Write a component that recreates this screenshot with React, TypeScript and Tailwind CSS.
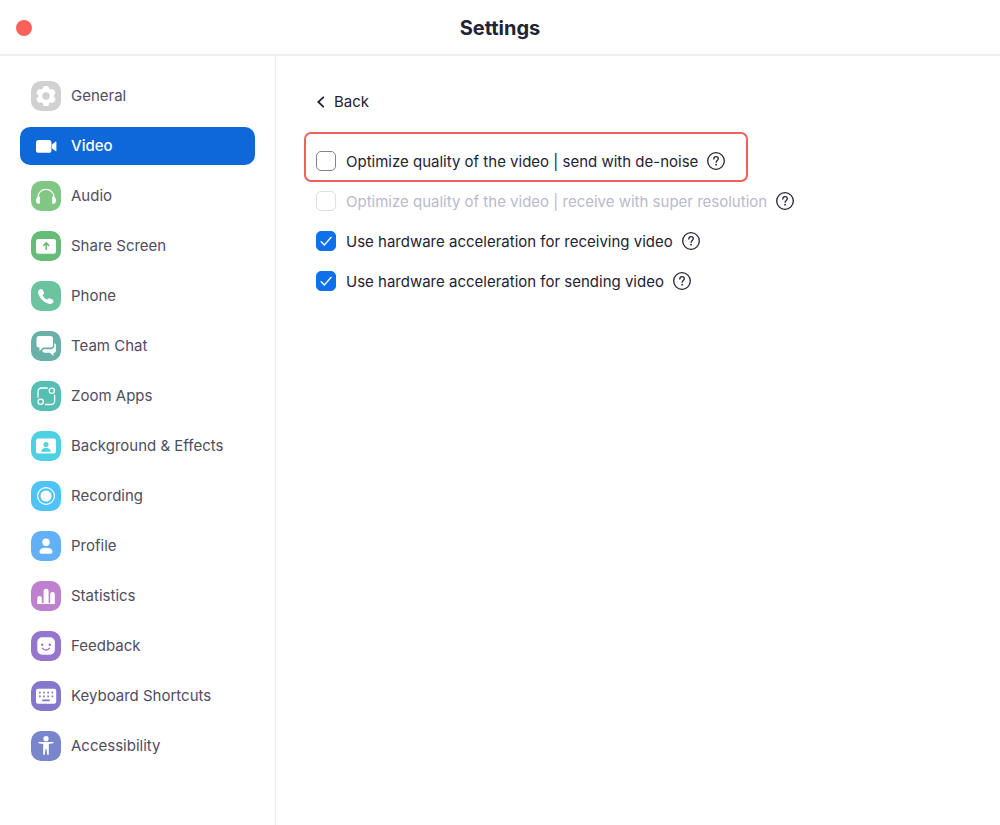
import { useState, type ReactNode } from "react";
import clsx from "clsx";

type NavItem = {
  label: string;
  tile: string;
  icon: ReactNode;
};

// Glyphs are drawn in white on a 30x30 tile, currentColor is the tile's own colour
const NAV_ITEMS: NavItem[] = [
  {
    label: "General",
    tile: "bg-[#d1d1d1] text-[#d1d1d1]",
    icon: (
      <g fill="#fff">
        <circle cx="15" cy="15" r="7.9" />
        <rect x="11.9" y="5" width="6.2" height="20" rx="2.6" />
        <rect x="11.9" y="5" width="6.2" height="20" rx="2.6" transform="rotate(60 15 15)" />
        <rect x="11.9" y="5" width="6.2" height="20" rx="2.6" transform="rotate(120 15 15)" />
        <circle cx="15" cy="15" r="3.8" fill="currentColor" />
      </g>
    ),
  },
  {
    label: "Video",
    tile: "bg-[#0e68d9] text-[#0e68d9]",
    icon: (
      <g fill="#fff">
        <rect x="5" y="9" width="15.4" height="12.8" rx="2.6" />
        <path d="M20.8 13.6l3.7-2.9c.4-.3.9-.1.9.4v8.6c0 .5-.5.7-.9.4l-3.7-2.9z" />
      </g>
    ),
  },
  {
    label: "Audio",
    tile: "bg-[#81c784] text-[#81c784]",
    icon: (
      <>
        <path d="M7 18.5V16a8 7.6 0 0 1 16 0v2.5" fill="none" stroke="#fff" strokeWidth="1.3" />
        <path d="M8.8 15.6v7.2c-2.3.3-3.8-1.2-3.8-3.4s1.5-4.1 3.8-3.8zM21.2 15.6v7.2c2.3.3 3.8-1.2 3.8-3.4s-1.5-4.1-3.8-3.8z" fill="#fff" />
      </>
    ),
  },
  {
    label: "Share Screen",
    tile: "bg-[#66bb77] text-[#66bb77]",
    icon: (
      <>
        <rect x="5" y="8" width="20" height="14.7" rx="2.2" fill="#fff" />
        <path d="M15.2 19v-6.8M12.2 14.9l3-3 3 3" fill="none" stroke="currentColor" strokeWidth="1.5" />
      </>
    ),
  },
  {
    label: "Phone",
    tile: "bg-[#6bc3a0] text-[#6bc3a0]",
    icon: (
      <path
        d="M8.2 8.7c1-.9 2.6-1 3.3-.1l1.3 2.6c.4.9.1 1.6-.5 2.2-.7.6-.7 1.1-.2 1.9.7 1.1 1.7 2.1 2.8 2.8.8.5 1.3.5 1.9-.2.6-.6 1.3-.9 2.2-.5l2.7 1.3c1 .6 1 2.2 0 3.2-1.3 1.3-3.2 1.3-5.4.4-3.8-1.6-7-4.7-8.5-8.4-.9-2-.9-4 .4-5.2z"
        fill="#fff"
      />
    ),
  },
  {
    label: "Team Chat",
    tile: "bg-[#69b0a8] text-[#69b0a8]",
    icon: (
      <g fill="#fff">
        <path d="M8 5h11.500a2.500 2.500 0 0 1 2.500 2.500v6.500a2.500 2.500 0 0 1-2.500 2.500h-7.300L8.500 20v-3.500H8A2.500 2.500 0 0 1 5.500 14V7.500A2.500 2.500 0 0 1 8 5z" />
        <path d="M23.300 12.200c1 .3 1.700 1.100 1.700 2.200v5c0 1.400-1 2.300-2.300 2.300h-.2V25l-3.600-3.300h-5.200c-1.300 0-2.300-.9-2.500-2.200l1.500-1.200h7c2 0 3.600-1.600 3.600-3.600z" />
      </g>
    ),
  },
  {
    label: "Zoom Apps",
    tile: "bg-[#56bfb4] text-[#56bfb4]",
    icon: (
      <g fill="none" stroke="#fff" strokeWidth="1.3">
        <path d="M16.3 7h-5.800A3.500 3.500 0 0 0 7 10.500v5.800M23.600 14.200V20a3.500 3.500 0 0 1-3.500 3.500h-5.600" strokeLinecap="round" />
        <circle cx="20.8" cy="9.700" r="2.600" />
        <circle cx="9.700" cy="20.700" r="2.600" />
      </g>
    ),
  },
  {
    label: "Background & Effects",
    tile: "bg-[#4dd0e1] text-[#4dd0e1]",
    icon: (
      <>
        <rect x="5" y="7.6" width="20" height="15" rx="2" fill="#fff" />
        <circle cx="15" cy="13.4" r="2.5" fill="currentColor" />
        <path d="M10.3 20.7c0-2.300 1.600-3.700 4.700-3.700s4.700 1.400 4.700 3.700z" fill="currentColor" />
      </>
    ),
  },
  {
    label: "Recording",
    tile: "bg-[#4fc3f7] text-[#4fc3f7]",
    icon: (
      <>
        <circle cx="15" cy="15" r="8.4" fill="none" stroke="#fff" strokeWidth="1.2" />
        <circle cx="15" cy="15" r="5.5" fill="#fff" />
      </>
    ),
  },
  {
    label: "Profile",
    tile: "bg-[#64b0f6] text-[#64b0f6]",
    icon: (
      <g fill="#fff">
        <circle cx="15" cy="11.3" r="3.7" />
        <path d="M8.5 20.800c0-2.600 2.700-4 6.500-4s6.500 1.400 6.500 4c0 1.200-.8 1.900-1.900 1.900h-9.200c-1.100 0-1.900-.7-1.900-1.900z" />
      </g>
    ),
  },
  {
    label: "Statistics",
    tile: "bg-[#bf80cf] text-[#bf80cf]",
    icon: (
      <g fill="#fff">
        <path d="M6.300 22.700v-5.500a2.200 2.200 0 0 1 4.500 0v5.500zM12.600 22.700V10.200a2.500 2.500 0 0 1 5 0v12.500zM19.200 22.700v-9.500a2.300 2.300 0 0 1 4.600 0v9.500z" />
        <rect x="6.3" y="21.9" width="17.5" height="1" />
      </g>
    ),
  },
  {
    label: "Feedback",
    tile: "bg-[#9575cd] text-[#9575cd]",
    icon: (
      <>
        <rect x="6.3" y="6.3" width="17.6" height="17.4" rx="5" fill="#fff" />
        <circle cx="11.2" cy="13.7" r="1.2" fill="currentColor" />
        <circle cx="18.8" cy="13.7" r="1.2" fill="currentColor" />
        <path d="M11.400 17.200c1.800 2.400 5.400 2.400 7.200 0" fill="none" stroke="currentColor" strokeWidth="1.4" strokeLinecap="round" />
      </>
    ),
  },
  {
    label: "Keyboard Shortcuts",
    tile: "bg-[#8578cc] text-[#8578cc]",
    icon: (
      <>
        <rect x="5" y="7.8" width="20.2" height="15" rx="2" fill="#fff" />
        <path
          d="M8 11.700h1.700M12.100 11.700h1.700M16.300 11.700h1.700M20.500 11.700h1.700M8 15.300h1.700M12.100 15.300h1.700M16.300 15.300h1.700M20.500 15.300h1.700M11.200 19.300h7.600"
          fill="none"
          stroke="currentColor"
          strokeWidth="1.7"
        />
      </>
    ),
  },
  {
    label: "Accessibility",
    tile: "bg-[#7986cb] text-[#7986cb]",
    icon: (
      <g fill="#fff">
        <circle cx="15" cy="7.7" r="2.6" />
        <path d="M8 10.900h14c.9 0 .9 1.300 0 1.400l-4.200.6v10.300c0 .9-1.600.9-1.700 0l-.6-5.200h-1l-.6 5.200c-.1.900-1.700.9-1.700 0V12.900L8 12.300c-.9-.1-.9-1.400 0-1.400z" />
      </g>
    ),
  },
];

const SidebarItem = ({ item, active, onSelect }: { item: NavItem; active: boolean; onSelect: () => void }) => (
  <button
    type="button"
    onClick={onSelect}
    className={clsx(
      "flex h-[38px] w-full items-center gap-[10px] rounded-[10px] pl-[11px] text-left text-[15px]",
      active ? "bg-[#0e68d9] font-medium text-white" : "text-[#4f4d5f]"
    )}
  >
    <span className={clsx("size-[30px] shrink-0 rounded-[10px]", item.tile)}>
      <svg viewBox="0 0 30 30" className="size-full" aria-hidden="true">
        {item.icon}
      </svg>
    </span>
    {item.label}
  </button>
);

const HelpButton = () => (
  <button type="button" aria-label="Help" className="ml-[9px] shrink-0 text-[#232333]">
    <svg viewBox="0 0 18 18" className="size-[18px]" fill="none" stroke="currentColor" strokeWidth="1.3" aria-hidden="true">
      <circle cx="9" cy="9" r="8.3" />
      <path d="M6.8 7c0-1.400 1-2.300 2.300-2.300s2.200.9 2.200 2.100c0 1.600-2.200 1.700-2.200 3.500" strokeLinecap="round" />
      <circle cx="9.1" cy="12.7" r=".9" fill="currentColor" stroke="none" />
    </svg>
  </button>
);

type OptionProps = {
  id: string;
  label: string;
  defaultChecked?: boolean;
  disabled?: boolean;
};

const OptionRow = ({ id, label, defaultChecked, disabled }: OptionProps) => (
  <div className="flex h-5 items-center">
    <span className="grid size-5 shrink-0">
      <input
        id={id}
        type="checkbox"
        defaultChecked={defaultChecked}
        disabled={disabled}
        className="peer col-start-1 row-start-1 size-5 appearance-none rounded-[5px] border border-[#858585] bg-white checked:border-[#0e71eb] checked:bg-[#0e71eb] disabled:border-[#dedee6]"
      />
      <svg
        viewBox="0 0 20 20"
        className="pointer-events-none invisible col-start-1 row-start-1 size-5 peer-checked:visible"
        fill="none"
        stroke="#fff"
        strokeWidth="1.4"
        strokeLinecap="round"
        aria-hidden="true"
      >
        <path d="M5.2 10.800l3.200 3.200 6.600-7.600" />
      </svg>
    </span>
    <label htmlFor={id} className={clsx("pt-[2px] pl-[10px] text-[15px] leading-5", disabled ? "text-[#babacc]" : "text-[#232333]")}>
      {label}
    </label>
    <HelpButton />
  </div>
);

const App = () => {
  const [active, setActive] = useState("Video");

  return (
    <div className="flex min-h-screen flex-col bg-white font-['Inter','Liberation_Sans',sans-serif]">
      {/* Title bar */}
      <header className="grid h-14 grid-cols-[1fr_auto_1fr] items-center border-b-2 border-[#edeff3] px-4 pt-[2px]">
        <button type="button" aria-label="Close" className="size-4 rounded-full bg-[#fc605b]" />
        <h1 className="text-[20px] font-bold text-[#232333]">Settings</h1>
      </header>

      <div className="flex flex-1">
        <nav className="flex w-[276px] shrink-0 flex-col gap-3 border-r border-[#e6e6ec] px-5 pt-[21px] pb-5">
          {NAV_ITEMS.map((item) => (
            <SidebarItem key={item.label} item={item} active={item.label === active} onSelect={() => setActive(item.label)} />
          ))}
        </nav>

        <main className="flex flex-1 flex-col items-start pt-9 pl-7">
          <button type="button" className="ml-3 flex h-5 items-center gap-2 text-[15px] text-[#232333]">
            <svg viewBox="0 0 10 12" className="h-3 w-[10px]" fill="none" stroke="currentColor" strokeWidth="1.8" aria-hidden="true">
              <path d="M7.3 1.300L2.300 6l5 4.700" strokeLinecap="round" />
            </svg>
            Back
          </button>

          {/* Highlighted option */}
          <div className="mt-5 rounded-[7px] border-2 border-[#f0605c] pt-[17px] pr-[21px] pb-[9px] pl-[10px]">
            <OptionRow id="denoise" label="Optimize quality of the video | send with de-noise" />
          </div>

          <div className="mt-[9px] flex flex-col gap-5 pl-3">
            <OptionRow id="super-resolution" label="Optimize quality of the video | receive with super resolution" disabled />
            <OptionRow id="hw-receiving" label="Use hardware acceleration for receiving video" defaultChecked />
            <OptionRow id="hw-sending" label="Use hardware acceleration for sending video" defaultChecked />
          </div>
        </main>
      </div>
    </div>
  );
};

export default App;
